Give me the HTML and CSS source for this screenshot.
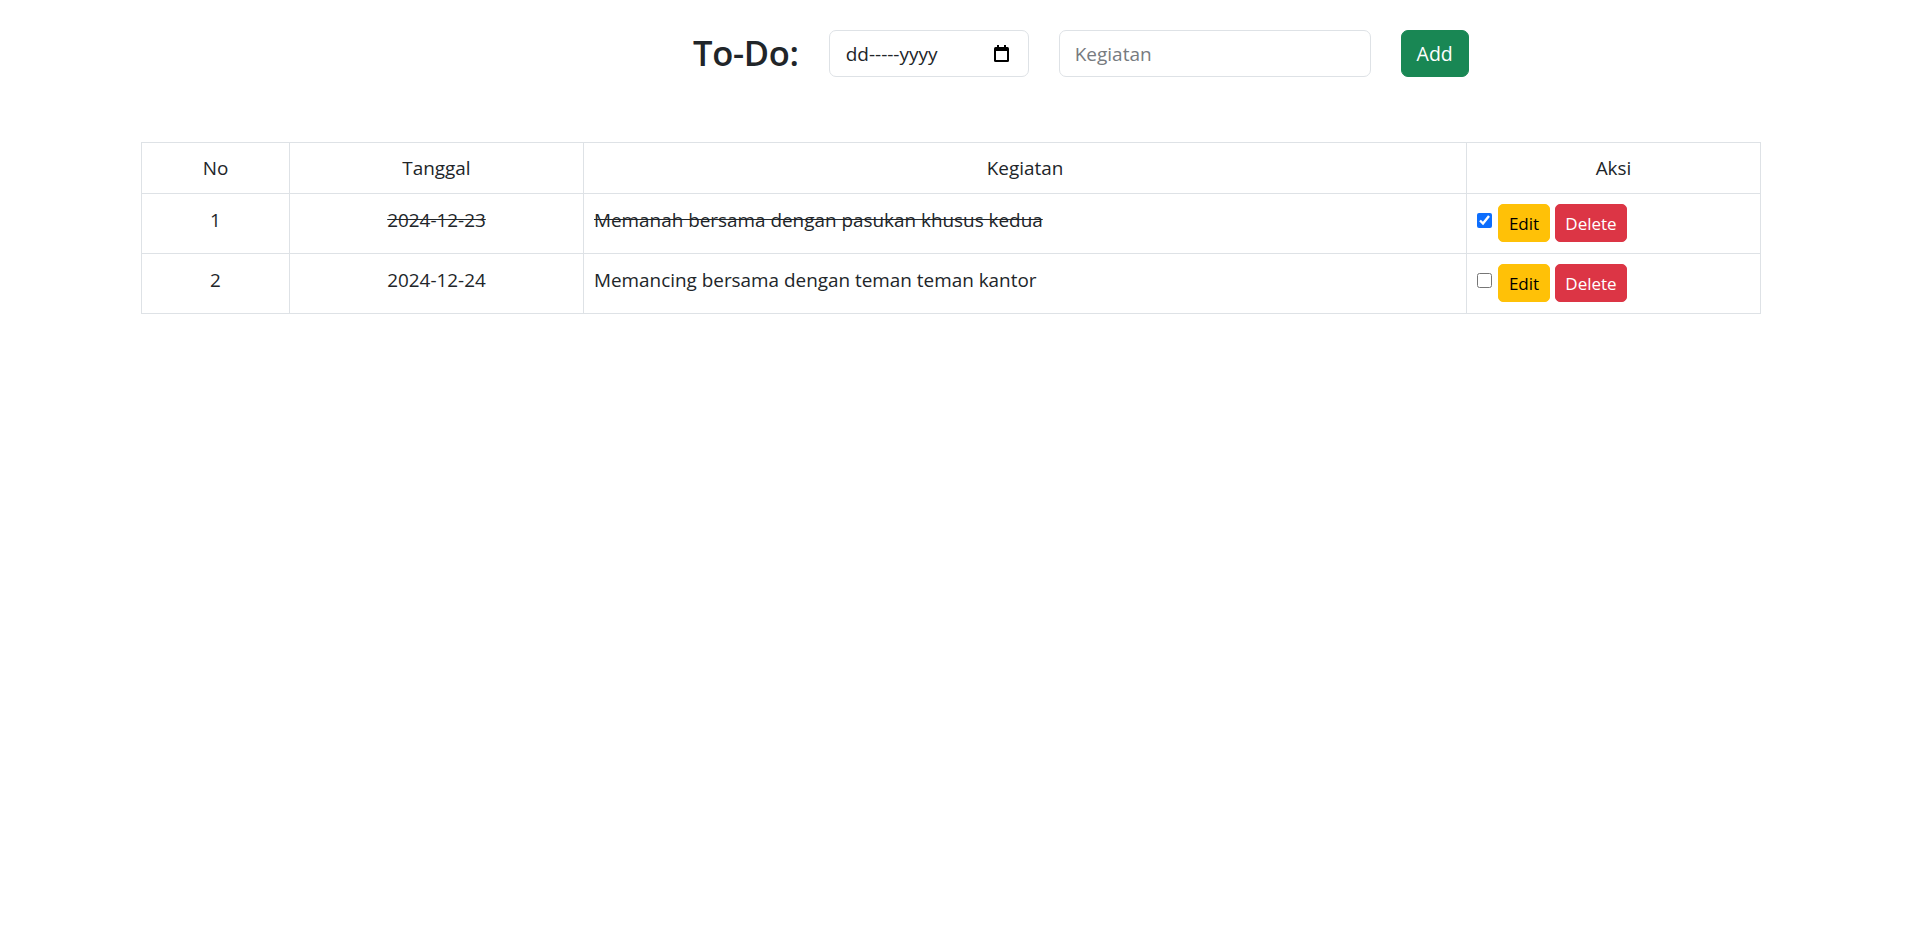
FILE: index.html
```html
<!DOCTYPE html>
<html lang="id">
<head>
<meta charset="utf-8">
<title>To-Do</title>
<link rel="stylesheet" href="styles.css">
</head>
<body>
<div class="page">
  <form class="todo-form">
    <h3 class="title">To-Do:</h3>
    <div class="date-input">
      <span class="date-text">dd-----yyyy</span>
      <svg class="cal-icon" width="15" height="17" viewBox="0 0 15 17" aria-hidden="true">
        <rect x="0" y="2" width="15" height="15" rx="1.5" fill="#000"/>
        <rect x="2" y="6" width="11" height="9" fill="#fff"/>
        <rect x="3" y="0" width="2" height="4" fill="#000"/>
        <rect x="10" y="0" width="2" height="4" fill="#000"/>
      </svg>
    </div>
    <input class="text-input" type="text" placeholder="Kegiatan">
    <button class="btn btn-add" type="button">Add</button>
  </form>

  <table class="todo-table">
    <colgroup>
      <col class="c-no"><col class="c-date"><col class="c-act"><col class="c-aksi">
    </colgroup>
    <thead>
      <tr><th>No</th><th>Tanggal</th><th>Kegiatan</th><th>Aksi</th></tr>
    </thead>
    <tbody>
      <tr>
        <td class="center">1</td>
        <td class="center done">2024-12-23</td>
        <td class="done">Memanah bersama dengan pasukan khusus kedua</td>
        <td class="aksi">
          <div class="actions">
            <input class="check" type="checkbox" checked>
            <button class="btn btn-sm btn-edit" type="button">Edit</button>
            <button class="btn btn-sm btn-delete" type="button">Delete</button>
          </div>
        </td>
      </tr>
      <tr>
        <td class="center">2</td>
        <td class="center">2024-12-24</td>
        <td>Memancing bersama dengan teman teman kantor</td>
        <td class="aksi">
          <div class="actions">
            <input class="check" type="checkbox">
            <button class="btn btn-sm btn-edit" type="button">Edit</button>
            <button class="btn btn-sm btn-delete" type="button">Delete</button>
          </div>
        </td>
      </tr>
    </tbody>
  </table>
</div>
</body>
</html>
```

FILE: styles.css
```css
* { box-sizing: border-box; }

html, body {
  margin: 0;
  padding: 0;
  background: #fff;
}

body {
  font-family: "Open Sans", "Noto Sans", sans-serif;
  font-size: 18.9px;
  line-height: 30px;
  color: #212529;
}

.page {
  padding-top: 30px;
}

.todo-form {
  display: flex;
  align-items: center;
  gap: 30px;
  padding-left: 693px;
}

.title {
  margin: 0;
  font-size: 34.5px;
  font-weight: 600;
  line-height: 40px;
  color: #212529;
  letter-spacing: -0.3px;
  position: relative;
  top: -1px;
}

.date-input {
  width: 200px;
  height: 47px;
  border: 1px solid #dee2e6;
  border-radius: 7px;
  display: flex;
  align-items: center;
  justify-content: space-between;
  padding: 0 19px 0 16px;
  background: #fff;
}

.date-text {
  font-size: 19px;
  color: #212529;
}

.cal-icon {
  display: block;
}

.text-input {
  width: 312px;
  height: 47px;
  border: 1px solid #dee2e6;
  border-radius: 7px;
  padding: 0 15px;
  font-family: inherit;
  font-size: 19px;
  color: #212529;
  background: #fff;
  outline: none;
}

.text-input::placeholder {
  color: #777b80;
}

.btn {
  font-family: inherit;
  border: 1px solid transparent;
  cursor: pointer;
}

.btn-add {
  width: 68px;
  height: 47px;
  border-radius: 7px;
  background: #198754;
  border-color: #198754;
  color: #fff;
  font-size: 19.5px;
  padding: 0;
}

.todo-table {
  margin-top: 65px;
  margin-left: 141px;
  width: 1619px;
  border-collapse: collapse;
  table-layout: fixed;
}

.c-no { width: 148px; }
.c-date { width: 294px; }
.c-act { width: 883px; }
.c-aksi { width: 294px; }

.todo-table th,
.todo-table td {
  border: 1px solid #dee2e6;
  padding: 10px;
  line-height: 30px;
  vertical-align: top;
}

.todo-table th {
  font-weight: 400;
  text-align: center;
}

.todo-table td {
  padding-top: 11px;
  padding-bottom: 18px;
}

.center { text-align: center; }

.done { text-decoration: line-through; }

.todo-table td.aksi {
  padding-top: 10px;
  padding-bottom: 10px;
}

.actions {
  display: flex;
  align-items: flex-start;
  gap: 5px;
  height: 39px;
}

.check {
  width: 15px;
  height: 15px;
  margin: 9px 1px 0 0;
  accent-color: #0d6efd;
}

.btn-sm {
  height: 38px;
  padding: 0 9px;
  font-size: 17px;
  border-radius: 5px;
  line-height: 1;
}

.btn-edit {
  width: 52px;
  background: #ffc107;
  border-color: #ffc107;
  color: #000;
}

.btn-delete {
  width: 72px;
  background: #dc3545;
  border-color: #dc3545;
  color: #fff;
}
```
